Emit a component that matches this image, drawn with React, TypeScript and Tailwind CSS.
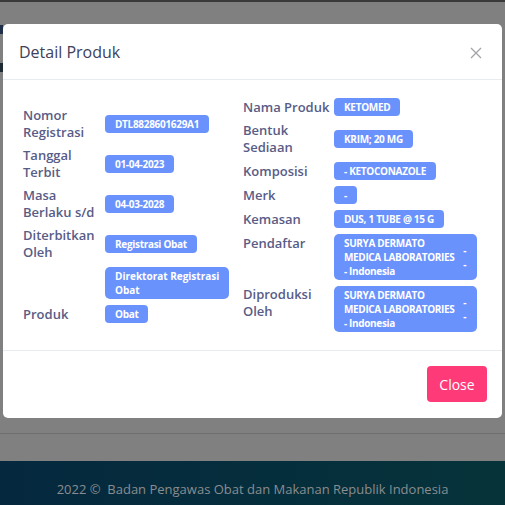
import React from "react";

const font = { fontFamily: '"Open Sans", "Liberation Sans", sans-serif' };

function Badge({ children, className = "" }: { children: React.ReactNode; className?: string }) {
  return (
    <span
      className={
        "block whitespace-nowrap rounded-[4px] bg-[#6a92fd] px-[10px] py-[3px] text-[10px] font-bold leading-[12px] tracking-[-0.3px] text-white " +
        className
      }
    >
      {children}
    </span>
  );
}

function Row({
  label,
  children,
  labelW,
  align = "center",
}: {
  label: React.ReactNode;
  children: React.ReactNode;
  labelW: string;
  align?: "center" | "start";
}) {
  return (
    <div className={"flex " + (align === "center" ? "items-center" : "items-start")}>
      <div className={labelW + " shrink-0 text-[13px] font-semibold leading-[17px] text-[#585c86]"}>{label}</div>
      <div className="flex flex-1 items-start">{children}</div>
    </div>
  );
}

function WideBadge({ lines }: { lines: string[] }) {
  return (
    <div className="flex w-[143px] items-center justify-between rounded-[5px] bg-[#6a92fd] py-[2px] pl-[10px] pr-[11px] text-[10px] font-bold leading-[14px] tracking-[-0.35px] text-white">
      <div className="whitespace-nowrap">
        {lines.map((l) => (
          <div key={l}>{l}</div>
        ))}
      </div>
      <div className="flex flex-col">
        <span>-</span>
        <span>-</span>
      </div>
    </div>
  );
}

export default function App() {
  return (
    <div className="relative h-[505px] w-[505px] overflow-hidden bg-[#808080]" style={font}>
      {/* page behind backdrop */}
      <div className="flex h-full flex-col">
        <div className="h-[2px] bg-[#3a3a3a]" />
        <div className="flex-1" />
        <div className="h-[1px] bg-[#6f6f6f]" />
        <div className="h-[27px]" />
        <div className="flex h-[44px] items-center justify-center bg-gradient-to-r from-[#05283e] to-[#06333a] pt-[14px] text-[13px] text-[#8a8d8f]">
          2022 ©&nbsp; Badan Pengawas Obat dan Makanan Republik Indonesia
        </div>
      </div>
      <div className="absolute left-0 top-[25px] h-[9px] w-[3px] bg-[#1f2f4a]" />
      <div className="absolute left-0 top-[63px] h-[9px] w-[3px] bg-[#1d2a33]" />

      {/* modal */}
      <div className="absolute left-[3px] top-[24px] w-[499px] rounded-[5px] bg-white">
        <div className="flex h-[56px] items-center justify-between border-b border-[#e9ecef] pl-[16px] pr-[20px]">
          <div className="text-[16px] text-[#40415a]">Detail Produk</div>
          <svg width="12" height="12" viewBox="0 0 12 12" className="mt-[2px]">
            <path d="M1 1 L11 11 M11 1 L1 11" stroke="#a3a3a8" strokeWidth="1.3" />
          </svg>
        </div>
        <div className="flex h-[271px] items-center border-b border-[#e9ecef] pl-[20px] pr-[20px]">
          <div className="flex w-[220px] flex-col gap-[6px]">
            <Row labelW="w-[82px]" label={<>Nomor<br />Registrasi</>}>
              <Badge>DTL8828601629A1</Badge>
            </Row>
            <Row labelW="w-[82px]" label={<>Tanggal<br />Terbit</>}>
              <Badge>01-04-2023</Badge>
            </Row>
            <Row labelW="w-[82px]" label={<>Masa<br />Berlaku s/d</>}>
              <Badge>04-03-2028</Badge>
            </Row>
            <Row labelW="w-[82px]" label={<>Diterbitkan<br />Oleh</>}>
              <Badge>Registrasi Obat</Badge>
            </Row>
            <Row labelW="w-[82px]" label={<></>}>
              <span className="block w-[124px] whitespace-nowrap rounded-[5px] bg-[#6a92fd] px-[10px] py-[2px] text-[10px] font-bold leading-[14px] text-white">
                Direktorat Registrasi
                <br />
                Obat
              </span>
            </Row>
            <Row labelW="w-[82px]" label="Produk">
              <Badge>Obat</Badge>
            </Row>
          </div>
          <div className="flex flex-1 flex-col gap-[6px]">
            <Row labelW="w-[91px]" label="Nama Produk">
              <Badge>KETOMED</Badge>
            </Row>
            <Row labelW="w-[91px]" label={<>Bentuk<br />Sediaan</>}>
              <Badge>KRIM; 20 MG</Badge>
            </Row>
            <Row labelW="w-[91px]" label="Komposisi">
              <Badge>- KETOCONAZOLE</Badge>
            </Row>
            <Row labelW="w-[91px]" label="Merk">
              <Badge>-</Badge>
            </Row>
            <Row labelW="w-[91px]" label="Kemasan">
              <Badge>DUS, 1 TUBE @ 15 G</Badge>
            </Row>
            <Row labelW="w-[91px]" align="start" label={<div className="pt-[1px]">Pendaftar</div>}>
              <WideBadge lines={["SURYA DERMATO", "MEDICA LABORATORIES", "- Indonesia"]} />
            </Row>
            <Row labelW="w-[91px]" align="start" label={<div>Diproduksi<br />Oleh</div>}>
              <WideBadge lines={["SURYA DERMATO", "MEDICA LABORATORIES", "- Indonesia"]} />
            </Row>
          </div>
        </div>
        <div className="flex h-[67px] items-start justify-end pr-[15px] pt-[15px]">
          <button className="h-[36px] w-[60px] rounded-[4px] bg-[#fe3a78] text-[14px] text-white">Close</button>
        </div>
      </div>
    </div>
  );
}
